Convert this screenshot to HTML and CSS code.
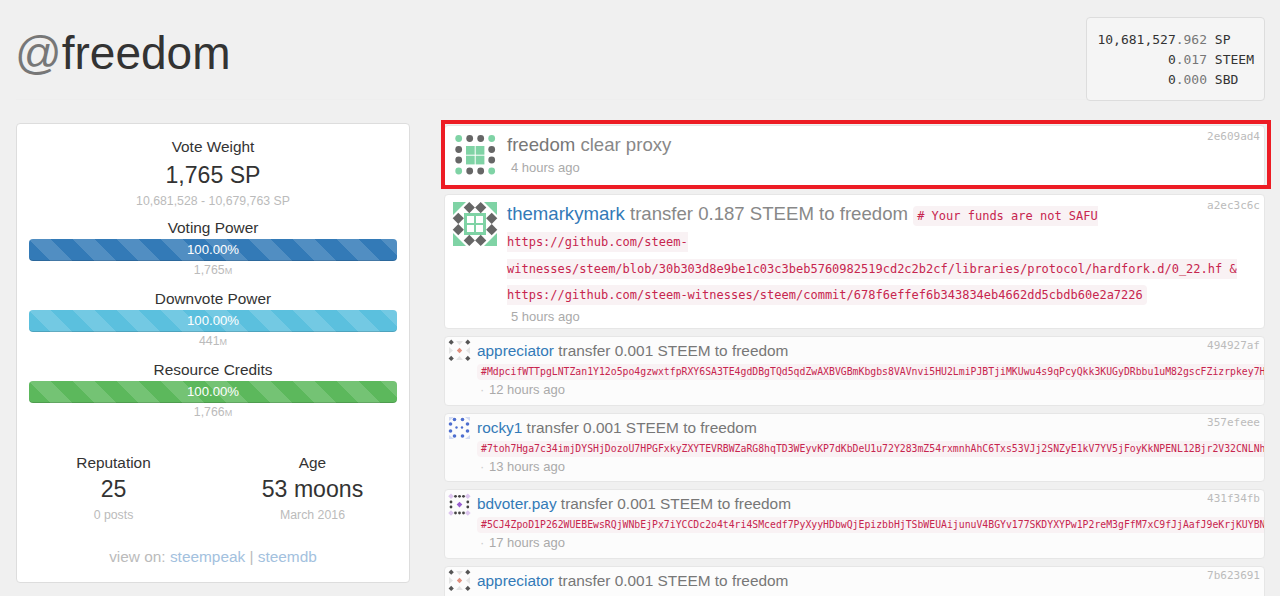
FILE: index.html
```html
<!DOCTYPE html>
<html lang="en">
<head>
<meta charset="utf-8">
<title>@freedom</title>
<link rel="stylesheet" href="styles.css">
</head>
<body>
<svg class="defs" width="0" height="0" aria-hidden="true">
  <symbol id="ic-freedom" viewBox="0 0 48 48">
    <g fill="#7fd3a5"><circle cx="7.7" cy="7.5" r="3.4"/><circle cx="40.7" cy="7.5" r="3.4"/><circle cx="7.7" cy="40" r="3.4"/><circle cx="40.7" cy="40" r="3.4"/>
    <rect x="15" y="15" width="8.7" height="8.7"/><rect x="24.7" y="15" width="8.7" height="8.7"/><rect x="15" y="24.7" width="8.7" height="8.7"/><rect x="24.7" y="24.7" width="8.7" height="8.7"/></g>
    <g fill="#666"><circle cx="18.7" cy="7.5" r="3.4"/><circle cx="29.7" cy="7.5" r="3.4"/><circle cx="18.7" cy="40" r="3.4"/><circle cx="29.7" cy="40" r="3.4"/><circle cx="7.7" cy="18.5" r="3.4"/><circle cx="7.7" cy="29" r="3.4"/><circle cx="40.7" cy="18.5" r="3.4"/><circle cx="40.7" cy="29" r="3.4"/></g>
  </symbol>
  <symbol id="ic-mark" viewBox="0 0 48 48">
    <g fill="#7fd3a5"><path d="M2 2h13L2 15z"/><path d="M46 2H33l13 13z"/><path d="M2 46h13L2 33z"/><path d="M46 46H33l13-13z"/><rect x="13" y="13" width="22" height="22"/></g>
    <g fill="#fff"><rect x="16" y="16" width="7" height="7"/><rect x="25" y="16" width="7" height="7"/><rect x="16" y="25" width="7" height="7"/><rect x="25" y="25" width="7" height="7"/></g>
    <g fill="#666"><path d="M18.3 2l5.6 5.6-5.6 5.6-5.6-5.6z"/><path d="M29.7 2l5.6 5.6-5.6 5.6-5.6-5.6z"/><path d="M18.3 34.8l5.6 5.6-5.6 5.6-5.6-5.6z"/><path d="M29.7 34.8l5.6 5.6-5.6 5.6-5.6-5.6z"/><path d="M7.3 12.7l5.6 5.6-5.6 5.6-5.6-5.6z"/><path d="M7.3 24.1l5.6 5.6-5.6 5.6-5.6-5.6z"/><path d="M40.7 12.7l5.6 5.6-5.6 5.6-5.6-5.6z"/><path d="M40.7 24.1l5.6 5.6-5.6 5.6-5.6-5.6z"/></g>
  </symbol>
  <symbol id="ic-appr" viewBox="0 0 24 24">
    <g fill="#555"><path d="M3.2.6l2.6 2.6-2.6 2.6L.6 3.2z"/><path d="M19.8.6l2.6 2.6-2.6 2.6-2.6-2.6z"/><path d="M3.2 16.8l2.6 2.6-2.6 2.6-2.6-2.6z"/><path d="M19.8 16.8l2.6 2.6-2.6 2.6-2.6-2.6z"/></g>
    <path fill="#e0907f" d="M11.5 8.8l2.7 2.7-2.7 2.7-2.7-2.7z"/>
    <g fill="#e4e4e4"><path d="M8 2h7l-3.5 4z"/><path d="M8 21h7l-3.5-4z"/><path d="M1 8v7l4-3.5z"/><path d="M22 8v7l-4-3.5z"/></g>
  </symbol>
  <symbol id="ic-rocky" viewBox="0 0 24 24">
    <g fill="#d3dbf2"><path d="M1 1h5L1 5z"/><path d="M22 1h-5l5 4z"/><path d="M1 23h5l-5-4z"/><path d="M22 23h-5l5-4z"/></g>
    <g fill="#4e6fd0"><circle cx="6.5" cy="3.5" r="1.8"/><circle cx="14.5" cy="3.5" r="1.8"/><circle cx="6.5" cy="20" r="1.8"/><circle cx="14.5" cy="20" r="1.8"/><circle cx="2.5" cy="8" r="1.8"/><circle cx="2.5" cy="15" r="1.8"/><circle cx="19.5" cy="8" r="1.8"/><circle cx="19.5" cy="15" r="1.8"/><circle cx="8.5" cy="11.5" r="1.2"/><circle cx="14" cy="11.5" r="1.2"/></g>
  </symbol>
  <symbol id="ic-bd" viewBox="0 0 24 24">
    <g fill="#dcc5ee"><path d="M3 1.500l2.800 2.800L3 7.100.2 4.300z"/><path d="M19.800 1.500l2.800 2.800-2.800 2.800L17 4.300z"/><path d="M3 18.200L5.800 21 3 23.800.2 21z"/><path d="M19.800 18.200l2.800 2.800-2.800 2.800L17 21z"/></g>
    <g fill="#444"><circle cx="7.500" cy="4.300" r="1.400"/><circle cx="11.500" cy="4.300" r="1.400"/><circle cx="15.500" cy="4.300" r="1.400"/><circle cx="7.500" cy="21" r="1.400"/><circle cx="11.500" cy="21" r="1.400"/><circle cx="15.500" cy="21" r="1.400"/><circle cx="3" cy="10" r="1.400"/><circle cx="3" cy="15" r="1.400"/><circle cx="19.800" cy="10" r="1.400"/><circle cx="19.800" cy="15" r="1.400"/></g>
    <path fill="#9a5fd0" d="M11.500 9.800l2.800 2.800-2.800 2.800-2.800-2.800z"/>
  </symbol>
</svg>

<header class="page-header">
  <h1 class="title"><span class="at">@</span>freedom</h1>
  <pre class="wallet">10,681,527<span class="dec">.962</span> SP
         0<span class="dec">.017</span> STEEM
         0<span class="dec">.000</span> SBD</pre>
</header>

<main class="layout">
  <section class="panel">
    <div class="label">Vote Weight</div>
    <div class="big big-top">1,765 SP</div>
    <div class="sub">10,681,528 - 10,679,763 SP</div>

    <div class="label gap8">Voting Power</div>
    <div class="bar bar-blue">100.00%</div>
    <div class="sub">1,765<span class="unit">M</span></div>

    <div class="label gap10">Downvote Power</div>
    <div class="bar bar-cyan">100.00%</div>
    <div class="sub">441<span class="unit">M</span></div>

    <div class="label gap10">Resource Credits</div>
    <div class="bar bar-green">100.00%</div>
    <div class="sub">1,766<span class="unit">M</span></div>

    <div class="stats">
      <div class="stat">
        <div class="label">Reputation</div>
        <div class="big">25</div>
        <div class="sub">0 posts</div>
      </div>
      <div class="stat">
        <div class="label">Age</div>
        <div class="big">53 moons</div>
        <div class="sub">March 2016</div>
      </div>
    </div>

    <div class="links">view on: <a href="#">steempeak</a> | <a href="#">steemdb</a></div>
  </section>

  <section class="feed">
    <article class="item item-large item-first">
      <div class="mark" aria-hidden="true"></div>
      <svg class="avatar-large"><use href="#ic-freedom"/></svg>
      <div class="body">
        <span class="hash">2e609ad4</span>
        <div class="head"><span class="who">freedom</span> clear proxy</div>
        <div class="time">4 hours ago</div>
      </div>
    </article>

    <article class="item item-large">
      <svg class="avatar-large"><use href="#ic-mark"/></svg>
      <div class="body">
        <span class="hash">a2ec3c6c</span>
        <div class="head"><a href="#">themarkymark</a> transfer 0.187 STEEM to freedom <code class="memo"># Your funds are not SAFU https://github.com/steem-witnesses/steem/blob/30b303d8e9be1c03c3beb5760982519cd2c2b2cf/libraries/protocol/hardfork.d/0_22.hf &amp; https://github.com/steem-witnesses/steem/commit/678f6effef6b343834eb4662dd5cbdb60e2a7226</code></div>
        <div class="time">5 hours ago</div>
      </div>
    </article>

    <article class="item item-small">
      <svg class="avatar-small"><use href="#ic-appr"/></svg>
      <div class="body">
        <span class="hash">494927af</span>
        <div class="head"><a href="#">appreciator</a> transfer 0.001 STEEM to freedom</div>
        <code class="memo-line">#MdpcifWTTpgLNTZan1Y12o5po4gzwxtfpRXY6SA3TE4gdDBgTQd5qdZwAXBVGBmKbgbs8VAVnvi5HU2LmiPJBTjiMKUwu4s9qPcyQkk3KUGyDRbbu1uM82gscFZizrpkey7HmN4xQ</code>
        <div class="time"><span class="dot">·</span>12 hours ago</div>
      </div>
    </article>

    <article class="item item-small">
      <svg class="avatar-small"><use href="#ic-rocky"/></svg>
      <div class="body">
        <span class="hash">357efeee</span>
        <div class="head"><a href="#">rocky1</a> transfer 0.001 STEEM to freedom</div>
        <code class="memo-line">#7toh7Hga7c34imjDYSHjDozoU7HPGFxkyZXYTEVRBWZaRG8hqTD3WEyvKP7dKbDeU1u72Y283mZ54rxmnhAhC6Txs53VJj2SNZyE1kV7YV5jFoyKkNPENL12Bjr2V32CNLNh4Qw</code>
        <div class="time"><span class="dot">·</span>13 hours ago</div>
      </div>
    </article>

    <article class="item item-small">
      <svg class="avatar-small"><use href="#ic-bd"/></svg>
      <div class="body">
        <span class="hash">431f34fb</span>
        <div class="head"><a href="#">bdvoter.pay</a> transfer 0.001 STEEM to freedom</div>
        <code class="memo-line">#5CJ4ZpoD1P262WUEBEwsRQjWNbEjPx7iYCCDc2o4t4ri4SMcedf7PyXyyHDbwQjEpizbbHjTSbWEUAijunuV4BGYv177SKDYXYPw1P2reM3gFfM7xC9fJjAafJ9eKrjKUYBN7Rt2</code>
        <div class="time"><span class="dot">·</span>17 hours ago</div>
      </div>
    </article>

    <article class="item item-small">
      <svg class="avatar-small"><use href="#ic-appr"/></svg>
      <div class="body">
        <span class="hash">7b623691</span>
        <div class="head"><a href="#">appreciator</a> transfer 0.001 STEEM to freedom</div>
      </div>
    </article>
  </section>
</main>
</body>
</html>
```

FILE: styles.css
```css
html, body {
  height: 100%;
  overflow: hidden;
}

body {
  margin: 0;
  padding: 0 15px 0 16px;
  background: #f0f0f0;
  color: #333;
  font-family: "Liberation Sans", Arial, sans-serif;
  font-size: 14px;
  line-height: 20px;
}

.defs {
  position: absolute;
}

.page-header {
  display: flex;
  justify-content: space-between;
  align-items: flex-start;
  height: 82px;
  padding-top: 17px;
  border-bottom: 1px solid #eeeeee;
}

.title {
  margin: 11px 0 0 -1px;
  font-size: 46px;
  font-weight: 400;
  line-height: 50px;
  color: #333;
}

.at {
  color: #777;
}

.wallet {
  margin: 0;
  padding: 12px 10px 10px;
  background: #f5f5f5;
  border: 1px solid #ddd;
  border-radius: 4px;
  font-family: "DejaVu Sans Mono", monospace;
  font-size: 13px;
  line-height: 20px;
  color: #333;
}

.dec {
  color: #777;
}

.layout {
  display: grid;
  grid-template-columns: 394px 821px;
  column-gap: 34px;
  align-items: start;
  margin-top: 23px;
}

.panel {
  box-sizing: border-box;
  padding: 13px 12px 15px;
  background: #fff;
  border: 1px solid #ddd;
  border-radius: 4px;
  text-align: center;
}

.label {
  font-size: 15.4px;
  line-height: 20px;
  color: #333;
}

.gap8 { margin-top: 8px; }
.gap10 { margin-top: 10px; }

.big {
  font-size: 23.1px;
  line-height: 33px;
  color: #333;
}

.big-top {
  margin-top: 2px;
}

.sub {
  height: 18px;
  font-size: 12.3px;
  line-height: 18px;
  color: #bbb;
}

.unit {
  font-size: 9px;
  line-height: 1;
}

.bar {
  height: 22px;
  margin-top: 1px;
  border-radius: 4px;
  background-image: linear-gradient(45deg,
    rgba(255, 255, 255, .15) 25%, transparent 25%,
    transparent 50%, rgba(255, 255, 255, .15) 50%,
    rgba(255, 255, 255, .15) 75%, transparent 75%);
  background-size: 44px 44px;
  box-shadow: inset 0 -1px 0 rgba(0, 0, 0, .15);
  color: #fff;
  font-size: 13.2px;
  line-height: 22px;
}

.bar-blue { background-color: #337ab7; }
.bar-cyan { background-color: #5bc0de; }
.bar-green { background-color: #5cb85c; }

.stats {
  display: grid;
  grid-template-columns: 1fr 1fr;
  margin: 32px -15px 0;
}

.links {
  margin-top: 23px;
  font-size: 15.4px;
  line-height: 20px;
  color: #bbb;
}

.links a {
  color: #a3c1de;
  text-decoration: none;
}

.feed {
  display: flex;
  flex-direction: column;
  gap: 7px;
  margin-top: 2px;
}

.item {
  position: relative;
  display: flex;
  background: #fff;
  border: 1px solid #e6e6e6;
  border-radius: 4px;
  color: #777;
}

.item-first {
  min-height: 62px;
  box-sizing: border-box;
}

.mark {
  position: absolute;
  top: -6px;
  left: -4px;
  right: -7px;
  bottom: -3px;
  border: 4px solid #ed1c24;
  pointer-events: none;
}

.item-large {
  padding: 5px 0 2.4px 6px;
  gap: 8px;
}

.item-small {
  padding: 3px 0 5.7px 3px;
  gap: 5px;
  overflow: hidden;
  background: #fcfcfc;
}

.avatar-large {
  flex: none;
  width: 48px;
  height: 48px;
}

.avatar-small {
  flex: none;
  width: 24px;
  height: 24px;
  margin-top: -1px;
}

.body {
  flex: 1;
  min-width: 0;
}

.hash {
  float: right;
  margin: -1px 4px 0 0;
  font-family: "DejaVu Sans Mono", monospace;
  font-size: 11px;
  line-height: 14px;
  color: #bbb;
}

.item-large .head {
  padding-top: 1px;
  font-size: 18.6px;
  line-height: 26.4px;
  color: #888;
}

.item-large .head .who {
  color: #777;
}

.item-small .head {
  font-size: 15.4px;
  line-height: 22px;
  color: #777;
}

.item a {
  color: #337ab7;
  text-decoration: none;
}

.memo {
  padding: 3px 4px;
  background: #f9f2f4;
  border-radius: 4px;
  color: #c7254e;
  font-family: "DejaVu Sans Mono", monospace;
  font-size: 12px;
  line-height: 14px;
}

.memo-line {
  display: block;
  clear: both;
  margin-top: 2px;
  padding-left: 4px;
  background: #f9f2f4;
  border-radius: 4px 0 0 4px;
  color: #c7254e;
  font-family: "DejaVu Sans Mono", monospace;
  font-size: 9.8px;
  line-height: 16px;
  white-space: nowrap;
  overflow: hidden;
}

.time {
  margin-top: 1px;
  padding-left: 4px;
  font-size: 13px;
  line-height: 18px;
  color: #aaa;
}

.item-small .time {
  padding-left: 3px;
}

.dot {
  display: inline-block;
  width: 9px;
  color: #ccc;
}
```
